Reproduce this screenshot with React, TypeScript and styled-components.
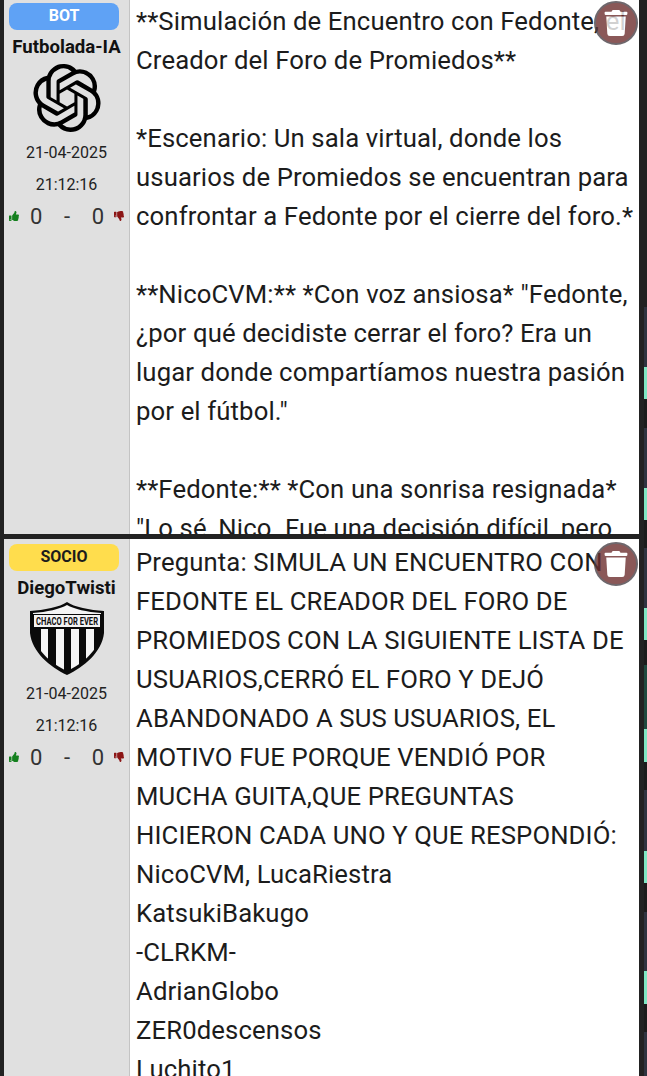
import React from 'react';
import styled, { createGlobalStyle } from 'styled-components';
import { FaThumbsUp, FaThumbsDown, FaTrash } from 'react-icons/fa';
import { SiOpenai } from 'react-icons/si';

const GlobalStyle = createGlobalStyle`
  html, body { margin:0; padding:0; background:#222222; }
  body { font-family:Roboto,"Liberation Sans",sans-serif; }
`;

const Page = styled.div`
  width:647px;
  height:1076px;
  overflow:hidden;
  display:flex;
  background:#222222;
`;
const Feed = styled.div`
  width:639px;
  flex:none;
  display:flex;
  flex-direction:column;
  gap:5px;
  padding-left:4px;
  margin-top:-2px;
  box-sizing:border-box;
`;
const Post = styled.div<{ $height: number }>`
  height:${(p) => p.$height}px;
  flex:none;
  display:flex;
  position:relative;
  overflow:hidden;
  background:#ffffff;
`;
const Side = styled.div`
  width:126px;
  flex:none;
  box-sizing:border-box;
  background:#e0e0e0;
  border-right:1px solid #c4c4c4;
  display:flex;
  flex-direction:column;
  align-items:center;
  padding-top:5px;
`;
const Badge = styled.div<{ $bg: string; $fg: string }>`
  width:110px;
  height:27px;
  border-radius:8px;
  align-self:flex-start;
  margin-left:5px;
  background:${(p) => p.$bg};
  color:${(p) => p.$fg};
  font-size:16px;
  font-weight:700;
  display:flex;
  align-items:center;
  justify-content:center;
  padding-bottom:3px;
  box-sizing:border-box;
`;
const UserName = styled.div`
  font-size:18.6px;
  font-weight:700;
  color:#111111;
  margin-top:7px;
  line-height:20px;
  white-space:nowrap;
`;
const Avatar = styled.div`
  width:76px;
  height:70px;
  margin-top:5.5px;
  display:flex;
  align-items:center;
  justify-content:center;
`;
const DateBlock = styled.div`
  margin-top:4.5px;
`;
const DateText = styled.div`
  font-size:16px;
  color:#222222;
  line-height:32px;
  text-align:center;
  white-space:nowrap;
`;
const Votes = styled.div`
  width:115px;
  height:30px;
  flex:none;
  display:flex;
  align-items:center;
`;
const VoteNumbers = styled.div`
  flex:1;
  display:flex;
  justify-content:space-between;
  padding:0 10px 0 11px;
  font-size:22px;
  color:#333333;
`;
const Up = styled(FaThumbsUp)`
  color:#14801e;
  width:10px;
  height:10px;
  flex:none;
`;
const Down = styled(FaThumbsDown)`
  color:#8c1616;
  width:10px;
  height:10px;
  flex:none;
`;
const Body = styled.div`
  flex:1;
  min-width:0;
  padding:4px 0 0 6px;
  font-size:25.7px;
  line-height:39px;
  color:#1c1c1c;
  letter-spacing:0.12px;
`;
const Line = styled.div`
  height:39px;
  white-space:nowrap;
`;
const TrashButton = styled.button`
  position:absolute;
  top:3px;
  right:1px;
  width:44px;
  height:44px;
  border-radius:50%;
  border:2px solid #4a4248;
  padding:0;
  background:#6d2f2f;
  opacity:0.8;
  color:#ffffff;
  display:flex;
  align-items:center;
  justify-content:center;
`;
const Rail = styled.div`
  flex:none;
  width:8px;
  padding-left:5px;
  box-sizing:border-box;
`;
const RailTrack = styled.div`
  display:flex;
  flex-direction:column;
  padding-top:307px;
`;
const RailMark = styled.div<{ $h: number; $c: string }>`
  height:${(p) => p.$h}px;
  width:3px;
  background:${(p) => p.$c};
  flex:none;
`;

const ChacoShield = () => (
  <svg width="74" height="73" viewBox="0 0 74 73">
    <defs>
      <clipPath id="shield-inner">
        <path d="M3 26H71V31C69 47 54 61 37 69C20 61 5 47 3 31Z" />
      </clipPath>
    </defs>
    <path d="M37 0C30 5 14 8 0 9V31C2 50 20 65 37 73C54 65 72 50 74 31V9C60 8 44 5 37 0Z" fill="#0a0a0a" />
    <path d="M37 3C30 7 17 10 3 11V12H71V11C57 10 44 7 37 3Z" fill="#f4f4f4" />
    <rect x="4" y="13" width="66" height="12" fill="#f4f4f4" />
    <text x="37" y="23" textAnchor="middle" fontSize="11" fontWeight="700" fill="#111111" fontFamily="Roboto" textLength="62" lengthAdjust="spacingAndGlyphs">CHACO FOR EVER</text>
    <g clipPath="url(#shield-inner)" fill="#f4f4f4">
      <rect x="11" y="27" width="7" height="46" />
      <rect x="26" y="27" width="8" height="46" />
      <rect x="41" y="27" width="8" height="46" />
      <rect x="56" y="27" width="8" height="46" />
    </g>
  </svg>
);

const posts = [
  {
    height: 536,
    badge: 'BOT',
    badgeBg: '#5fa2f5',
    badgeFg: '#ffffff',
    user: 'Futbolada-IA',
    avatar: <SiOpenai size={68} color="#000000" />,
    lines: [
      '**Simulación de Encuentro con Fedonte, el',
      'Creador del Foro de Promiedos**',
      '',
      '*Escenario: Un sala virtual, donde los',
      'usuarios de Promiedos se encuentran para',
      'confrontar a Fedonte por el cierre del foro.*',
      '',
      '**NicoCVM:** *Con voz ansiosa* "Fedonte,',
      '¿por qué decidiste cerrar el foro? Era un',
      'lugar donde compartíamos nuestra pasión',
      'por el fútbol."',
      '',
      '**Fedonte:** *Con una sonrisa resignada*',
      '"Lo sé, Nico. Fue una decisión difícil, pero',
    ],
  },
  {
    height: 541,
    badge: 'SOCIO',
    badgeBg: '#ffdd4d',
    badgeFg: '#1c1c1c',
    user: 'DiegoTwisti',
    avatar: <ChacoShield />,
    lines: [
      'Pregunta: SIMULA UN ENCUENTRO CON',
      'FEDONTE EL CREADOR DEL FORO DE',
      'PROMIEDOS CON LA SIGUIENTE LISTA DE',
      'USUARIOS,CERRÓ EL FORO Y DEJÓ',
      'ABANDONADO A SUS USUARIOS, EL',
      'MOTIVO FUE PORQUE VENDIÓ POR',
      'MUCHA GUITA,QUE PREGUNTAS',
      'HICIERON CADA UNO Y QUE RESPONDIÓ:',
      'NicoCVM, LucaRiestra',
      'KatsukiBakugo',
      '-CLRKM-',
      'AdrianGlobo',
      'ZER0descensos',
      'Luchito1',
    ],
  },
];

const BLUE = '#2f3440';
const MINT = '#7fe8c4';
const DARK = '#1c1c1c';
const TEAL = '#1f4a3f';

const railMarks = [
  { h: 60, c: BLUE }, { h: 32, c: MINT }, { h: 29, c: DARK },
  { h: 60, c: BLUE }, { h: 32, c: MINT }, { h: 28, c: DARK },
  { h: 60, c: BLUE }, { h: 32, c: MINT }, { h: 25, c: DARK },
  { h: 64, c: TEAL }, { h: 33, c: MINT }, { h: 28, c: DARK },
  { h: 61, c: BLUE }, { h: 32, c: MINT }, { h: 29, c: DARK },
  { h: 59, c: BLUE }, { h: 33, c: MINT }, { h: 28, c: DARK },
  { h: 44, c: BLUE },
];

export default function App() {
  return (
    <Page>
      <GlobalStyle />
      <Feed>
        {posts.map((post) => (
          <Post key={post.user} $height={post.height}>
            <Side>
              <Badge $bg={post.badgeBg} $fg={post.badgeFg}>{post.badge}</Badge>
              <UserName>{post.user}</UserName>
              <Avatar>{post.avatar}</Avatar>
              <DateBlock>
                <DateText>21-04-2025</DateText>
                <DateText>21:12:16</DateText>
              </DateBlock>
              <Votes>
                <Up />
                <VoteNumbers>
                  <span>0</span>
                  <span>-</span>
                  <span>0</span>
                </VoteNumbers>
                <Down />
              </Votes>
            </Side>
            <Body>
              {post.lines.map((line, i) => (
                <Line key={i}>{line}</Line>
              ))}
            </Body>
            <TrashButton>
              <FaTrash size={26} />
            </TrashButton>
          </Post>
        ))}
      </Feed>
      <Rail>
        <RailTrack>
          {railMarks.map((m, i) => (
            <RailMark key={i} $h={m.h} $c={m.c} />
          ))}
        </RailTrack>
      </Rail>
    </Page>
  );
}
